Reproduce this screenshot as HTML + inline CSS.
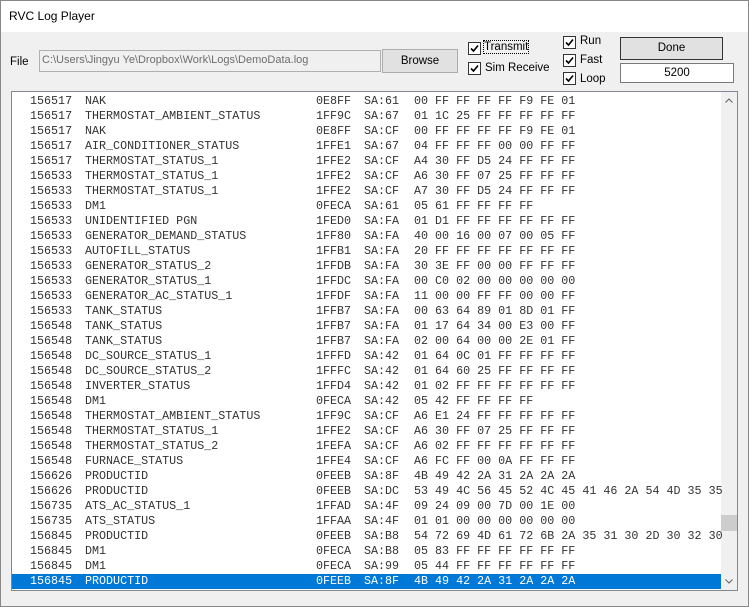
<!DOCTYPE html>
<html><head><style>
body{margin:0;width:749px;height:607px;overflow:hidden;font-family:"Liberation Sans",sans-serif;font-size:11.5px;background:#f0f0f0;position:relative}
.win{position:absolute;left:0;top:0;width:747px;height:605px;border:1px solid #888;background:#f0f0f0}
.title{position:absolute;left:0;top:0;width:747px;height:31px;background:#fff}
.title span{position:absolute;left:8px;top:8px;font-size:12px;color:#000}
.a{position:absolute}
.cb{position:absolute;width:11px;height:11px;border:1px solid #333;background:#fff}
.cb svg{position:absolute;left:1px;top:1px}
.btn{position:absolute;background:#e1e1e1;border:1px solid #adadad;text-align:center;box-sizing:border-box}
.list{position:absolute;left:10px;top:90px;width:727px;height:500px;border:1px solid #828790;background:#fff;box-sizing:border-box;overflow:hidden}
.row{position:absolute;left:0;height:15px;width:709px;font-family:"Liberation Mono",monospace;font-size:11.7px;line-height:15px;white-space:pre;color:#333}
.row.sel{background:#0078d7;color:#fff}
.sb{position:absolute;left:709px;top:0;width:16px;height:498px;background:#f0f0f0}
</style></head><body>
<div class="win">
<div class="title"><span>RVC Log Player</span></div>
<div class="a" style="left:9px;top:55px">File</div>
<div class="a" style="left:38px;top:49px;width:342px;height:22px;border:1px solid #b0b0b0;background:#f0f0f0;box-sizing:border-box;color:#6d6d6d;padding:3px 2px;font-size:11px">C:\Users\Jingyu Ye\Dropbox\Work\Logs\DemoData.log</div>
<div class="btn" style="left:381px;top:48px;width:76px;height:24px;line-height:22px">Browse</div>
<div class="cb" style="left:467px;top:41px"><svg width="9" height="9"><path d="M1 4.5L3.5 7L8 1.5" stroke="#000" stroke-width="1.6" fill="none"/></svg></div>
<div class="a" style="left:483px;top:40px;outline:1px dotted #000">Transmit</div>
<div class="cb" style="left:467px;top:61px"><svg width="9" height="9"><path d="M1 4.5L3.5 7L8 1.5" stroke="#000" stroke-width="1.6" fill="none"/></svg></div>
<div class="a" style="left:484px;top:61px">Sim Receive</div>
<div class="cb" style="left:562px;top:35px"><svg width="9" height="9"><path d="M1 4.5L3.5 7L8 1.5" stroke="#000" stroke-width="1.6" fill="none"/></svg></div>
<div class="a" style="left:579px;top:34px">Run</div>
<div class="cb" style="left:562px;top:53px"><svg width="9" height="9"><path d="M1 4.5L3.5 7L8 1.5" stroke="#000" stroke-width="1.6" fill="none"/></svg></div>
<div class="a" style="left:579px;top:53px">Fast</div>
<div class="cb" style="left:562px;top:71px"><svg width="9" height="9"><path d="M1 4.5L3.5 7L8 1.5" stroke="#000" stroke-width="1.6" fill="none"/></svg></div>
<div class="a" style="left:579px;top:72px">Loop</div>
<div class="btn" style="left:619px;top:36px;width:103px;height:23px;line-height:21px;border-color:#333">Done</div>
<div class="a" style="left:619px;top:62px;width:114px;height:20px;border:1px solid #7a7a7a;background:#fff;box-sizing:border-box;text-align:center;line-height:18px">5200</div>
<div class="list">
<div class="sb"><svg style="position:absolute;left:4px;top:6px" width="8" height="5"><path d="M0.5 4.5L4 1L7.5 4.5" stroke="#606060" fill="none"/></svg><div style="position:absolute;left:0;top:423px;width:16px;height:16px;background:#cdcdcd"></div><svg style="position:absolute;left:4px;top:487px" width="8" height="5"><path d="M0.5 0.5L4 4L7.5 0.5" stroke="#606060" fill="none"/></svg></div>
<div id="rows"></div>
</div>
</div>
<script>
var d=[
["156517","NAK","0E8FF","SA:61","00 FF FF FF FF F9 FE 01"],
["156517","THERMOSTAT_AMBIENT_STATUS","1FF9C","SA:67","01 1C 25 FF FF FF FF FF"],
["156517","NAK","0E8FF","SA:CF","00 FF FF FF FF F9 FE 01"],
["156517","AIR_CONDITIONER_STATUS","1FFE1","SA:67","04 FF FF FF 00 00 FF FF"],
["156517","THERMOSTAT_STATUS_1","1FFE2","SA:CF","A4 30 FF D5 24 FF FF FF"],
["156533","THERMOSTAT_STATUS_1","1FFE2","SA:CF","A6 30 FF 07 25 FF FF FF"],
["156533","THERMOSTAT_STATUS_1","1FFE2","SA:CF","A7 30 FF D5 24 FF FF FF"],
["156533","DM1","0FECA","SA:61","05 61 FF FF FF FF"],
["156533","UNIDENTIFIED PGN","1FED0","SA:FA","01 D1 FF FF FF FF FF FF"],
["156533","GENERATOR_DEMAND_STATUS","1FF80","SA:FA","40 00 16 00 07 00 05 FF"],
["156533","AUTOFILL_STATUS","1FFB1","SA:FA","20 FF FF FF FF FF FF FF"],
["156533","GENERATOR_STATUS_2","1FFDB","SA:FA","30 3E FF 00 00 FF FF FF"],
["156533","GENERATOR_STATUS_1","1FFDC","SA:FA","00 C0 02 00 00 00 00 00"],
["156533","GENERATOR_AC_STATUS_1","1FFDF","SA:FA","11 00 00 FF FF 00 00 FF"],
["156533","TANK_STATUS","1FFB7","SA:FA","00 63 64 89 01 8D 01 FF"],
["156548","TANK_STATUS","1FFB7","SA:FA","01 17 64 34 00 E3 00 FF"],
["156548","TANK_STATUS","1FFB7","SA:FA","02 00 64 00 00 2E 01 FF"],
["156548","DC_SOURCE_STATUS_1","1FFFD","SA:42","01 64 0C 01 FF FF FF FF"],
["156548","DC_SOURCE_STATUS_2","1FFFC","SA:42","01 64 60 25 FF FF FF FF"],
["156548","INVERTER_STATUS","1FFD4","SA:42","01 02 FF FF FF FF FF FF"],
["156548","DM1","0FECA","SA:42","05 42 FF FF FF FF"],
["156548","THERMOSTAT_AMBIENT_STATUS","1FF9C","SA:CF","A6 E1 24 FF FF FF FF FF"],
["156548","THERMOSTAT_STATUS_1","1FFE2","SA:CF","A6 30 FF 07 25 FF FF FF"],
["156548","THERMOSTAT_STATUS_2","1FEFA","SA:CF","A6 02 FF FF FF FF FF FF"],
["156548","FURNACE_STATUS","1FFE4","SA:CF","A6 FC FF 00 0A FF FF FF"],
["156626","PRODUCTID","0FEEB","SA:8F","4B 49 42 2A 31 2A 2A 2A"],
["156626","PRODUCTID","0FEEB","SA:DC","53 49 4C 56 45 52 4C 45 41 46 2A 54 4D 35 35"],
["156735","ATS_AC_STATUS_1","1FFAD","SA:4F","09 24 09 00 7D 00 1E 00"],
["156735","ATS_STATUS","1FFAA","SA:4F","01 01 00 00 00 00 00 00"],
["156845","PRODUCTID","0FEEB","SA:B8","54 72 69 4D 61 72 6B 2A 35 31 30 2D 30 32 30"],
["156845","DM1","0FECA","SA:B8","05 83 FF FF FF FF FF FF"],
["156845","DM1","0FECA","SA:99","05 44 FF FF FF FF FF FF"],
["156845","PRODUCTID","0FEEB","SA:8F","4B 49 42 2A 31 2A 2A 2A"]];
var h="";
d.forEach(function(r,i){
h+='<div class="row'+(i==d.length-1?' sel':'')+'" style="top:'+(2+i*15)+'px"><span style="position:absolute;left:18px">'+r[0]+'</span><span style="position:absolute;left:73px">'+r[1]+'</span><span style="position:absolute;left:304px">'+r[2]+'</span><span style="position:absolute;left:352px">'+r[3]+'</span><span style="position:absolute;left:402px">'+r[4]+'</span></div>';
});
document.getElementById('rows').innerHTML=h;
</script>
</body></html>
